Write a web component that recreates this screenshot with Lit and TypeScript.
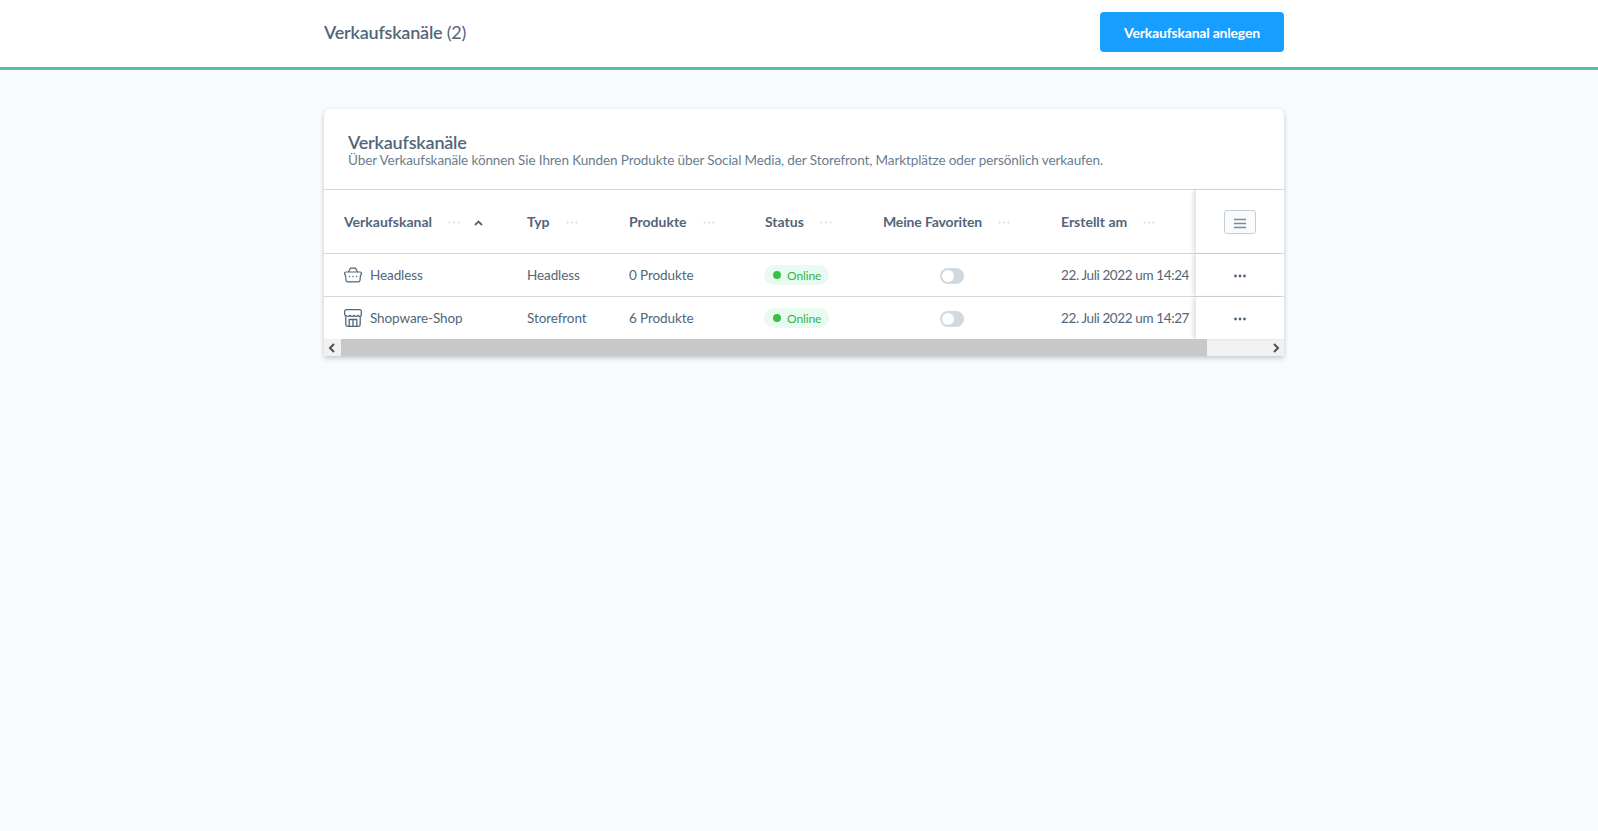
import { LitElement, html, css, svg } from 'lit';
import { customElement } from 'lit/decorators.js';

interface Channel {
  name: string;
  icon: 'basket' | 'store';
  type: string;
  products: string;
  created: string;
}

const CHANNELS: Channel[] = [
  { name: 'Headless', icon: 'basket', type: 'Headless', products: '0 Produkte', created: '22. Juli 2022 um 14:24' },
  { name: 'Shopware-Shop', icon: 'store', type: 'Storefront', products: '6 Produkte', created: '22. Juli 2022 um 14:27' },
];

const COLUMNS = ['Verkaufskanal', 'Typ', 'Produkte', 'Status', 'Meine Favoriten', 'Erstellt am'];

const basketIcon = svg`<svg class="icon" width="18" height="16" viewBox="0 0 18 16" fill="none" stroke="#52667a" stroke-width="1.200">
  <path d="M1.800 5h14.400c.7 0 1.200.5 1.200 1.200v.9c0 .6-.4 1-.9 1.100l-.5 5c-.1 1-.8 1.700-1.800 1.700H3.800c-1 0-1.700-.7-1.800-1.700l-.5-5c-.5-.1-.9-.5-.9-1.100v-.9C.6 5.500 1.100 5 1.800 5z" />
  <path d="M4.500 5l2-3.800h5l2 3.800" />
  <path d="M5.500 9.500h.01M9 9.500h.01M12.500 9.500h.01" stroke-width="1.500" stroke-linecap="round" />
</svg>`;

const storeIcon = svg`<svg class="icon" width="18" height="18" viewBox="0 0 18 18" fill="none" stroke="#52667a" stroke-width="1.300">
  <path d="M2.500.7h13c1 0 1.800.8 1.800 1.800v3.200c0 1-.8 1.600-1.700 1.600-1 0-1.600-.6-1.600-1.600 0 1-.9 1.600-2 1.600s-2-.6-2-1.600c0 1-.8 1.600-1.900 1.600s-2-.6-2-1.600c0 1-.7 1.600-1.600 1.600S.7 6.700.7 5.700V2.500c0-1 .8-1.800 1.800-1.800z" />
  <path d="M1.800 7.300v8.200c0 1 .7 1.800 1.700 1.800h11c1 0 1.700-.8 1.700-1.800V7.300" />
  <path d="M5.200 17.300v-6.800h7.600v6.800M9 10.500v6.800" />
</svg>`;

const dotsIcon = svg`<svg class="dots" width="12" height="3" viewBox="0 0 12 3"><circle cx="1.500" cy="1.500" r="1" /><circle cx="6" cy="1.500" r="1" /><circle cx="10.500" cy="1.500" r="1" /></svg>`;

const actionDots = svg`<svg class="act-dots" width="12" height="4" viewBox="0 0 12 4"><circle cx="1.500" cy="2" r="1.400" /><circle cx="6" cy="2" r="1.400" /><circle cx="10.500" cy="2" r="1.400" /></svg>`;

@customElement('app-root')
export class AppRoot extends LitElement {
  static styles = css`
    :host {
      display: block;
      min-height: 831px;
      background: #f9fafb;
      color: #52667a;
      font-family: Lato, "Noto Sans", sans-serif;
      font-size: 13.5px;
      letter-spacing: -0.1px;
    }

    .topbar {
      height: 64px;
      background: #fff;
      border-bottom: 3px solid #54bfa6;
      padding: 0 314px 3px 324px;
      display: flex;
      align-items: center;
      justify-content: space-between;
    }

    .page-title {
      font-size: 18px;
      font-weight: 600;
      letter-spacing: -0.22px;
    }

    .page-title span {
      font-weight: 400;
    }

    .primary {
      width: 184px;
      height: 40px;
      border: 0;
      border-radius: 4px;
      background: #189eff;
      color: #fff;
      font: inherit;
      font-size: 14px;
      font-weight: 700;
      letter-spacing: -0.2px;
    }

    .content {
      padding: 39px 314px 0 324px;
    }

    .card {
      background: #fff;
      border-radius: 7px 7px 0 0;
      box-shadow: 0 2px 5px rgba(120, 138, 155, 0.45);
      overflow: hidden;
    }

    .card-head {
      height: 81px;
      padding: 23px 24px 0;
      box-sizing: border-box;
      border-bottom: 1px solid #d1d9e0;
    }

    .card-title {
      font-size: 18px;
      font-weight: 600;
      line-height: 20px;
      letter-spacing: -0.2px;
    }

    .card-sub {
      line-height: 16px;
      color: #6a7d90;
    }

    .row {
      display: grid;
      grid-template-columns: 183px 102px 136px 118px 178px 154px 89px;
      align-items: center;
      height: 42px;
      border-bottom: 1px solid #d1d9e0;
    }

    .row.head {
      height: 63px;
      font-size: 14px;
      font-weight: 700;
      letter-spacing: 0;
    }

    .row.head .cell:nth-child(5) {
      letter-spacing: -0.15px;
    }

    .row.last {
      border-bottom: 0;
    }

    .cell {
      padding-left: 20px;
      display: flex;
      align-items: center;
      white-space: nowrap;
      height: 100%;
    }

    .row.head .cell {
      gap: 16px;
    }

    .date {
      letter-spacing: -0.38px;
    }

    .dots {
      fill: #d1d9e0;
      flex: none;
      margin-top: 2px;
    }

    .sort {
      margin-left: -2px;
      margin-top: 2px;
    }

    .icon {
      flex: none;
      margin-right: 8px;
    }

    .pill {
      display: inline-flex;
      align-items: center;
      gap: 6px;
      height: 20px;
      margin-left: -1px;
      padding: 0 8px 0 9px;
      border-radius: 10px;
      background: #e9faf0;
      color: #37b34a;
      font-size: 12px;
    }

    .pill i {
      width: 8px;
      height: 8px;
      border-radius: 50%;
      background: #37c14a;
    }

    .fav {
      padding-left: 77px;
    }

    .toggle {
      width: 24px;
      height: 16px;
      margin-top: 2px;
      border-radius: 8px;
      background: #d1d9e0;
      padding: 2px;
      box-sizing: border-box;
    }

    .toggle i {
      display: block;
      width: 12px;
      height: 12px;
      border-radius: 50%;
      background: #fff;
    }

    .action {
      height: 100%;
      display: flex;
      align-items: center;
      justify-content: center;
      background: #fff;
      box-shadow: -3px 0 4px -1px rgba(0, 0, 0, 0.12);
      border-left: 1px solid #e6e9ec;
    }

    .act-dots {
      fill: #52667a;
      flex: none;
      margin-top: 2px;
    }

    .menu {
      width: 32px;
      height: 24px;
      box-sizing: border-box;
      border: 1px solid #c5ced7;
      border-radius: 3px;
      background: #f9fafb;
      display: flex;
      align-items: center;
      justify-content: center;
    }

    .menu svg {
      margin-top: 3px;
    }

    .scrollbar {
      height: 17px;
      display: flex;
      background: #f1f1f1;
      align-items: center;
    }

    .scrollbar .thumb {
      width: 866px;
      height: 100%;
      background: #c8c8c8;
    }

    .scrollbar .arrow {
      width: 17px;
      flex: none;
      display: flex;
      justify-content: center;
    }

    .scrollbar .arrow.left {
      padding-right: 2px;
      box-sizing: border-box;
    }

    .scrollbar .arrow.right {
      padding-left: 2px;
      box-sizing: border-box;
    }

    .scrollbar .spacer {
      flex: 1;
    }
  `;

  private renderHead() {
    return html`
      <div class="row head">
        ${COLUMNS.map(
          (label, i) => html`
            <div class="cell">
              ${label} ${dotsIcon}
              ${i === 0
                ? html`<svg class="sort" width="9" height="6" viewBox="0 0 9 6" fill="none" stroke="#52667a" stroke-width="1.800"><path d="M1 5l3.500-3.500L8 5" /></svg>`
                : ''}
            </div>
          `,
        )}
        <div class="action">
          <div class="menu">
            <svg width="12" height="11" viewBox="0 0 12 11" stroke="#758ca3" stroke-width="1.700"><path d="M0 1.500h12M0 5.500h12M0 9.500h12" /></svg>
          </div>
        </div>
      </div>
    `;
  }

  private renderRow(c: Channel, last: boolean) {
    return html`
      <div class="row ${last ? 'last' : ''}">
        <div class="cell">${c.icon === 'basket' ? basketIcon : storeIcon}${c.name}</div>
        <div class="cell">${c.type}</div>
        <div class="cell">${c.products}</div>
        <div class="cell"><span class="pill"><i></i>Online</span></div>
        <div class="cell fav"><div class="toggle"><i></i></div></div>
        <div class="cell date">${c.created}</div>
        <div class="action">${actionDots}</div>
      </div>
    `;
  }

  render() {
    return html`
      <header class="topbar">
        <div class="page-title">Verkaufskanäle <span>(2)</span></div>
        <button class="primary">Verkaufskanal anlegen</button>
      </header>
      <main class="content">
        <section class="card">
          <div class="card-head">
            <div class="card-title">Verkaufskanäle</div>
            <div class="card-sub">Über Verkaufskanäle können Sie Ihren Kunden Produkte über Social Media, der Storefront, Marktplätze oder persönlich verkaufen.</div>
          </div>
          ${this.renderHead()}
          ${CHANNELS.map((c, i) => this.renderRow(c, i === CHANNELS.length - 1))}
          <div class="scrollbar">
            <div class="arrow left"><svg width="7" height="10" viewBox="0 0 7 10" fill="none" stroke="#505050" stroke-width="2"><path d="M6 1L2 5l4 4" /></svg></div>
            <div class="thumb"></div>
            <div class="spacer"></div>
            <div class="arrow right"><svg width="7" height="10" viewBox="0 0 7 10" fill="none" stroke="#505050" stroke-width="2"><path d="M1 1l4 4-4 4" /></svg></div>
          </div>
        </section>
      </main>
    `;
  }
}
